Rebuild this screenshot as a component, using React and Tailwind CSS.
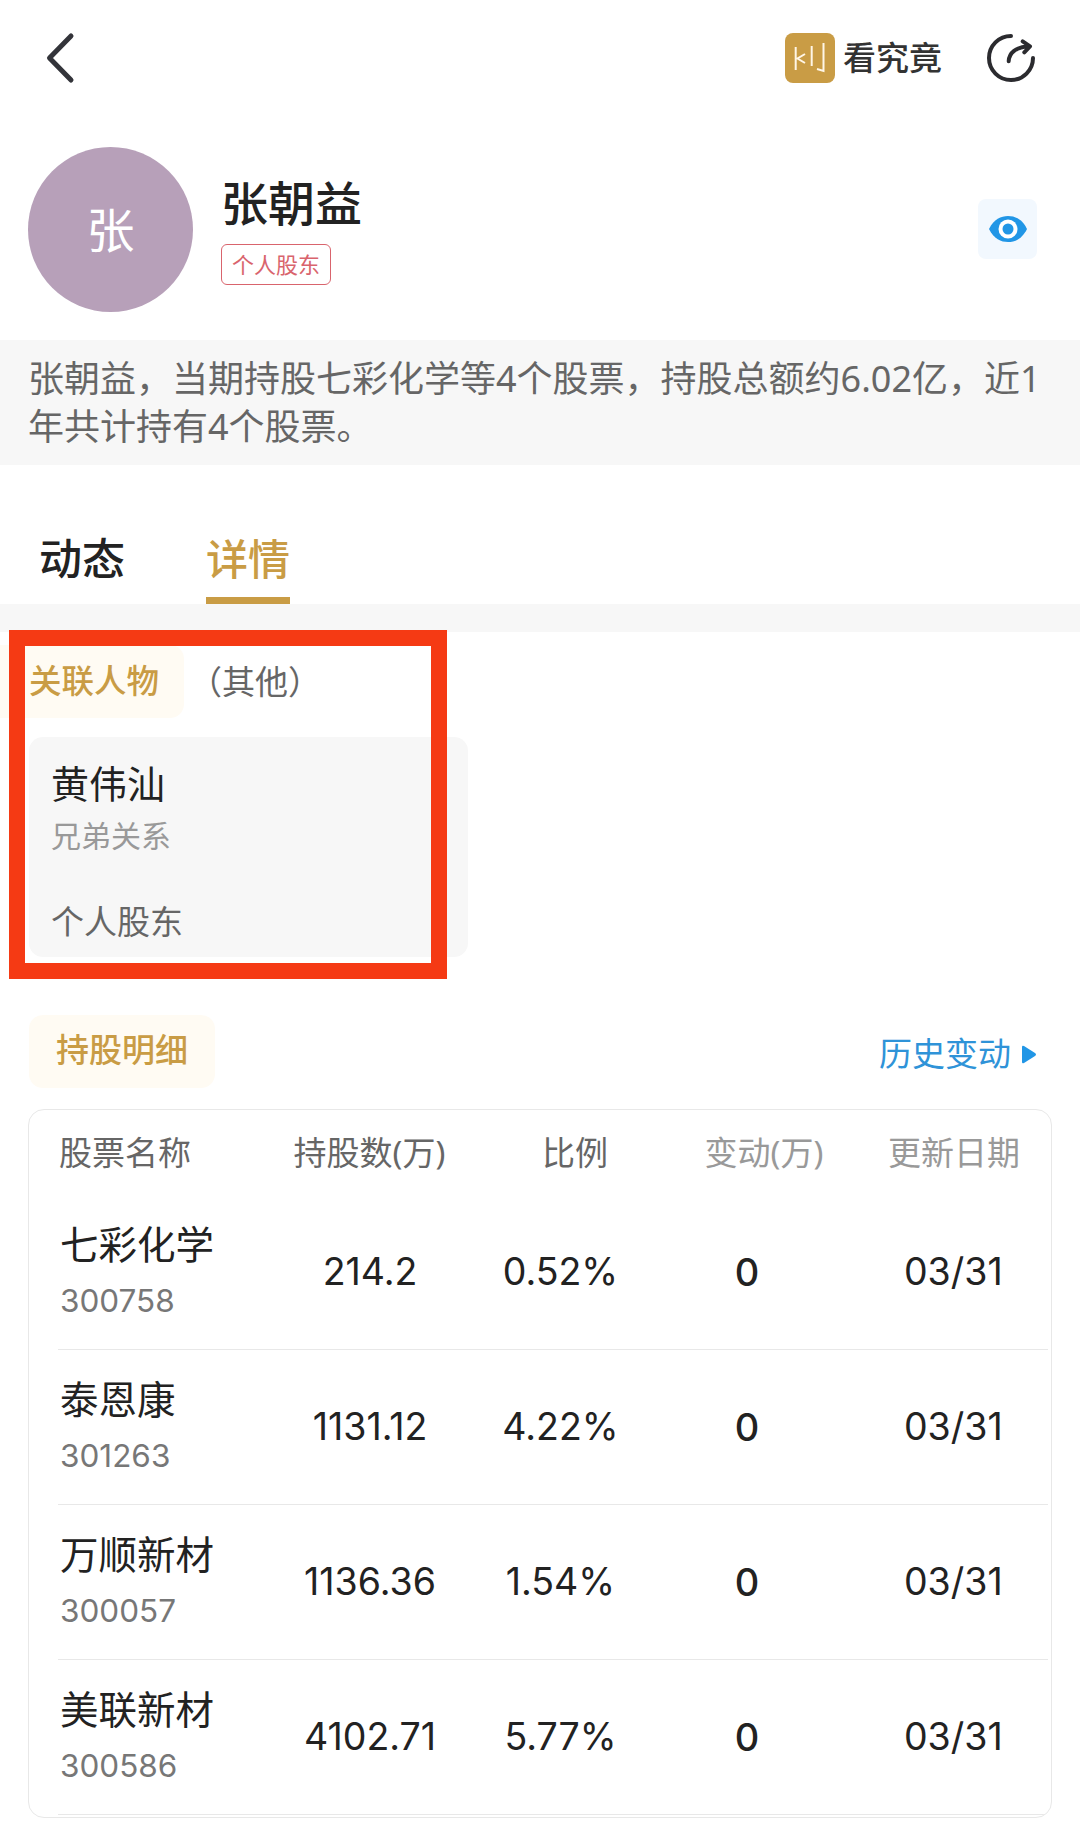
const rows = [
  { name: '七彩化学', code: '300758', shares: '214.2', ratio: '0.52%' },
  { name: '泰恩康', code: '301263', shares: '1131.12', ratio: '4.22%' },
  { name: '万顺新材', code: '300057', shares: '1136.36', ratio: '1.54%' },
  { name: '美联新材', code: '300586', shares: '4102.71', ratio: '5.77%' },
];

function Header() {
  return (
    <div className="h-[116px] flex items-center justify-between pl-[46px] pr-[44px]">
      <svg width="30" height="52" viewBox="0 0 30 52" fill="none">
        <path d="M25 4 L3.5 26 L25 48" stroke="#33343a" strokeWidth="5" strokeLinecap="round" strokeLinejoin="round" />
      </svg>
      <div className="flex items-center">
        <svg width="50" height="50" viewBox="0 0 50 50" fill="none">
          <rect width="50" height="50" rx="8" fill="#c99c45" />
          <path d="M10.7 14 V37 M20 21 L12.5 25.5 L20 30 M26.7 13 V33 M38.5 10 V38 L32 36" stroke="#fff6e6" strokeWidth="2" />
        </svg>
        <span className="ml-[8px] text-[33px] leading-[40px] font-medium text-[#333333]">看究竟</span>
        <svg className="ml-[44px]" width="50" height="50" viewBox="-1 -1 50 50" fill="none" stroke="#2b2b2f" strokeWidth="4" strokeLinecap="round" strokeLinejoin="round">
          <path d="M24 2 A22 22 0 1 0 46 24" />
          <path d="M21.7 27.3 C22 19 29 13 41.7 12.3 M35.7 7.3 L43 12.3 L37.3 18.3" />
        </svg>
      </div>
    </div>
  );
}

function Profile() {
  return (
    <div className="h-[224px] pt-[31px] pl-[28px] pr-[43px] flex items-start">
      <div className="w-[165px] h-[165px] rounded-full bg-[#b7a0b9] flex items-center justify-center text-[48px] text-white shrink-0">
        张
      </div>
      <div className="ml-[28px] pt-[25px]">
        <div className="text-[47px] leading-[62px] font-medium text-[#222222]">张朝益</div>
        <div className="mt-[10px] w-[110px] h-[41px] border border-[#d9646d] rounded-[6px] flex items-center justify-center text-[22px] text-[#d9646d]">
          个人股东
        </div>
      </div>
      <div className="ml-auto mt-[52px] w-[59px] h-[60px] rounded-[8px] bg-[#f2f8fe] flex items-center justify-center">
        <svg width="40" height="28" viewBox="0 0 40 28">
          <path d="M1 14 C6 4 13 1 20 1 C27 1 34 4 39 14 C34 24 27 27 20 27 C13 27 6 24 1 14 Z" fill="#2196e6" />
          <circle cx="20" cy="14" r="9.5" fill="#ffffff" />
          <circle cx="20" cy="14" r="5.5" fill="#2196e6" />
        </svg>
      </div>
    </div>
  );
}

function Summary() {
  return (
    <div className="h-[125px] bg-[#f7f7f7] pt-[15px] pl-[28px] text-[36px] leading-[48px] text-[#666666] whitespace-nowrap">
      <div>张朝益，当期持股七彩化学等4个股票，持股总额约6.02亿，近1</div>
      <div>年共计持有4个股票。</div>
    </div>
  );
}

function Tabs() {
  return (
    <div className="h-[139px] flex items-end pl-[39px]">
      <div className="h-[139px] pt-[69px] text-[43px] leading-[50px] font-medium text-[#222222]">动态</div>
      <div className="ml-[81px] h-[139px] pt-[69px] border-b-[7px] border-[#c99c45] text-[42px] leading-[50px] font-medium text-[#c99c45]">详情</div>
    </div>
  );
}

function Related() {
  return (
    <div className="relative h-[383px]">
      <div className="pt-[13px] flex items-center">
        <div className="w-[184px] h-[73px] rounded-r-[14px] bg-[#fffbf3] pl-[29px] flex items-center text-[32.5px] font-medium text-[#c99c45]">
          关联人物
        </div>
        <div className="ml-[5px] text-[33px] text-[#666666]">（其他）</div>
      </div>
      <div className="mt-[19px] ml-[29px] w-[439px] h-[220px] rounded-[14px] bg-[#f7f7f7] pl-[22px] pt-[22px]">
        <div className="text-[38px] leading-[48px] text-[#222222]">黄伟汕</div>
        <div className="mt-[9px] text-[30px] leading-[40px] text-[#999999]">兄弟关系</div>
        <div className="mt-[44px] text-[33px] leading-[44px] text-[#666666]">个人股东</div>
      </div>
      {/* red annotation drawn over the screenshot */}
      <div className="absolute left-[9px] top-[-2px] w-[438px] h-[349px] border-[16px] border-[#f53a14]"></div>
    </div>
  );
}

function Holdings() {
  return (
    <div>
      <div className="flex items-center justify-between pl-[29px] pr-[43px]">
        <div className="w-[186px] h-[73px] pb-[4px] rounded-[14px] bg-[#fffbf3] flex items-center justify-center text-[33px] font-medium text-[#c99c45]">
          持股明细
        </div>
        <div className="flex items-center pt-[5px]">
          <span className="text-[33px] text-[#2f93d8]">历史变动</span>
          <svg className="ml-[11px]" width="15" height="21" viewBox="0 0 15 21">
            <path d="M2 2 L13 9 Q15 10.5 13 12 L2 19 Q0 20 0 18 V3 Q0 1 2 2 Z" fill="#2196e6" />
          </svg>
        </div>
      </div>
      <div className="mt-[21px] ml-[28px] w-[1024px] h-[709px] border border-[#e8e8e8] rounded-[16px] overflow-hidden">
        <div className="h-[85px] pl-[30px] flex items-center text-[33px] text-[#666666]">
          <div className="w-[211px]">股票名称</div>
          <div className="w-[199px] text-center">持股数(万)</div>
          <div className="w-[212px] text-center">比例</div>
          <div className="w-[166px] text-center text-[#999999]">变动(万)</div>
          <div className="ml-[12px] w-[190px] text-center text-[#999999]">更新日期</div>
        </div>
        {rows.map((r) => (
          <div key={r.code} className="ml-[29px] mr-[3px] h-[155px] pl-[2px] flex items-center border-b border-[#e8e8e8] text-[37.5px] text-[#222222] font-['Inter','Noto_Sans_CJK_SC',sans-serif]">
            <div className="w-[210px] pb-[1px]">
              <div className="text-[38.5px] leading-[50px]">{r.name}</div>
              <div className="mt-[9px] text-[31.5px] leading-[44px] text-[#777777]">{r.code}</div>
            </div>
            <div className="w-[202px] text-center">{r.shares}</div>
            <div className="w-[180px] text-center">{r.ratio}</div>
            <div className="w-[194px] text-center text-[38px] font-medium">0</div>
            <div className="ml-[15px] w-[190px] text-center">03/31</div>
          </div>
        ))}
      </div>
    </div>
  );
}

export default function App() {
  return (
    <div className="w-[1080px] h-[1824px] overflow-hidden bg-white font-['Noto_Sans','Noto_Sans_CJK_SC',sans-serif]">
      <Header />
      <Profile />
      <Summary />
      <Tabs />
      <div className="h-[28px] bg-[#f7f7f7]"></div>
      <Related />
      <Holdings />
    </div>
  );
}
